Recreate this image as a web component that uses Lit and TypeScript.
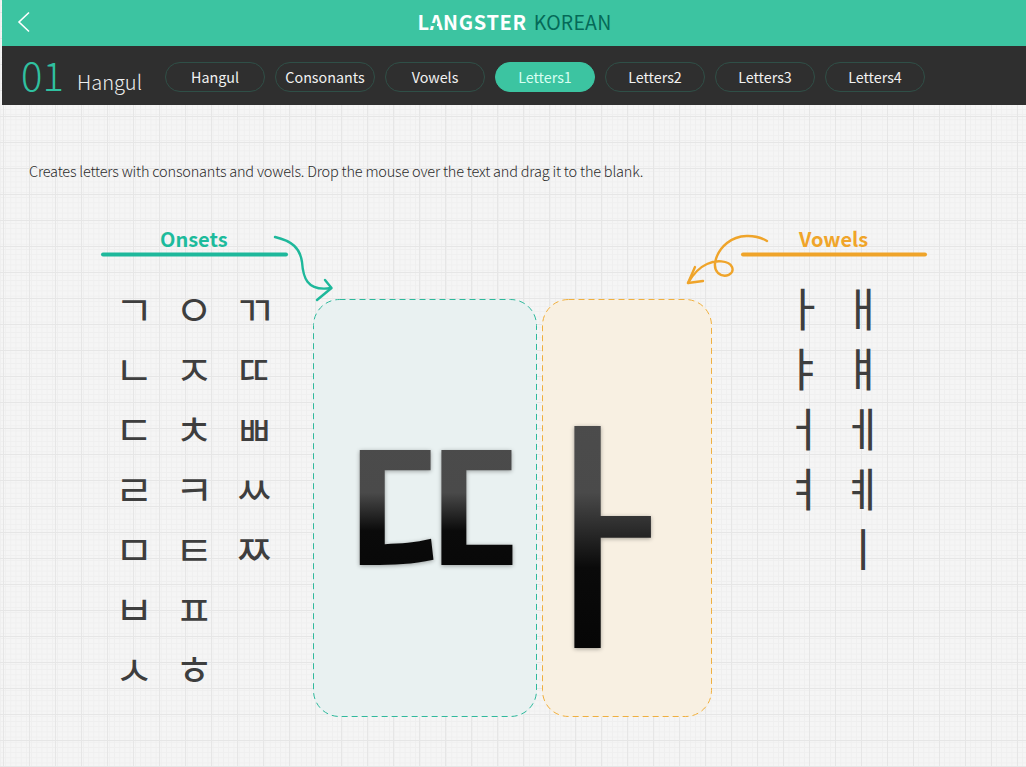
import { LitElement, html, css, svg } from "lit";
import { customElement } from "lit/decorators.js";

const TABS = ["Hangul", "Consonants", "Vowels", "Letters1", "Letters2", "Letters3", "Letters4"];
const ONSETS = ["ㄱ","ㅇ","ㄲ","ㄴ","ㅈ","ㄸ","ㄷ","ㅊ","ㅃ","ㄹ","ㅋ","ㅆ","ㅁ","ㅌ","ㅉ","ㅂ","ㅍ","","ㅅ","ㅎ",""];
const VOWELS = ["ㅏ","ㅐ","ㅑ","ㅒ","ㅓ","ㅔ","ㅕ","ㅖ","","ㅣ"];

@customElement("app-root")
export class AppRoot extends LitElement {
  static styles = css`
    :host { display: block; width: 1026px; height: 767px; overflow: hidden; position: relative;
      font-family: "Noto Sans CJK KR", "Noto Sans", sans-serif; color: #3a3a3a; background: #f4f4f4; }
    .page { height: 767px; display: flex; flex-direction: column; padding-left: 2px; box-sizing: border-box;
      background-color: #f5f5f5;
      background-image:
        linear-gradient(#e6e6e6 1px, transparent 1px),
        linear-gradient(90deg, #e6e6e6 1px, transparent 1px),
        linear-gradient(#efefef 1px, transparent 1px),
        linear-gradient(90deg, #efefef 1px, transparent 1px);
      background-size: 26px 26px, 26px 26px, 5.2px 5.2px, 5.2px 5.2px;
      background-position: 0 12px, 3px 0, 0 0, 0 0; }
    .top { height: 46px; flex: none; background: #3cc4a1; position: relative; display: flex; justify-content: center; align-items: center; }
    .back { position: absolute; left: 14px; top: 11px; }
    .logo { font-size: 20px; line-height: 44px; height: 46px; margin-left: 1px; color: #056a58; display: flex; gap: 7px; }
    .logo b { color: #fff; font-weight: 700; letter-spacing: 0.65px; position: relative; }
    .logo b::after { content: ""; position: absolute; left: 13px; top: 22.5px; width: 6px; height: 3px; background: #3cc4a1; }
    .logo span { letter-spacing: 0.2px; font-size: 19.5px; }
    .bar { height: 59px; flex: none; background: #2f2f2f; display: flex; align-items: center; padding-left: 19px; }
    .num { font-size: 40px; font-weight: 200; color: #2fc0a0; line-height: 59px; width: 56px; margin-top: -2px; }
    .title { font-size: 20px; font-weight: 300; color: #eee; width: 88px; margin-top: 12px; line-height: 32px; }
    .tabs { display: flex; gap: 10px; margin-top: 3px; }
    .tab { box-sizing: border-box; width: 100px; height: 30px; border-radius: 15px; border: 1px solid #2f4f47; color: #f2f2f2;
      font-size: 14.3px; text-align: center; line-height: 28px; }
    .tab.on { background: #3cc4a1; border-color: #3cc4a1; color: #d8fff2; }
    .intro { margin: 55px 0 0 27px; font-size: 14.5px; line-height: 22px; font-weight: 300; color: #2b2b2b; letter-spacing: -0.2px; }
    .stage { position: relative; flex: 1; }
    .grid { display: grid; position: absolute; }
    .cell { text-align: center; color: #3e3e3e; line-height: 60px; height: 60px; }
    .onsets { left: 102px; top: 173px; grid-template-columns: 60px 60px 60px; font-size: 42px; font-weight: 400; }
    .vowels { left: 772px; top: 171px; grid-template-columns: 60px 58px; font-size: 46px; font-weight: 400; }
    .zone { position: absolute; top: 194px; height: 418px; box-sizing: border-box; border-radius: 26px; }
    .z1 { left: 311px; width: 224px; background: #e9f1f1; }
    .z2 { left: 540px; width: 170px; background: #f8f0e2; }
    .big { font-weight: 500; line-height: 1; color: transparent;
      -webkit-background-clip: text; background-clip: text; }
    .b1 { font-size: 240px; background-image: linear-gradient(#4c4c4c 0%, #4a4a4a 49%, #0a0a0a 65%, #060606 100%); }
    .b2 { font-size: 251px; background-image: linear-gradient(#4c4c4c 0%, #4a4a4a 38%, #0a0a0a 68%, #060606 100%); }
    .shadow { position: absolute; filter: drop-shadow(0 1px 2px rgba(0,0,0,.35)); }
    .s1 { left: 323px; top: 270px; }
    .s2 { left: 477px; top: 292px; }
    .art { position: absolute; left: -2px; top: -105px; width: 1026px; height: 767px; pointer-events: none; }
    .head { position: absolute; font-weight: 700; font-size: 20px; line-height: 26px; }
    .h1 { left: 158px; top: 121px; color: #1dbb9c; }
    .h2 { left: 797px; top: 121px; color: #f0a52a; }
  `;

  private arrows() {
    return svg`
      <rect x="313.5" y="299.5" width="223" height="417" rx="26" fill="none" stroke="#2fb99c" stroke-dasharray="6 4"/>
      <rect x="542.5" y="299.5" width="169" height="417" rx="26" fill="none" stroke="#f0b040" stroke-dasharray="6 4"/>
      <line x1="103" y1="254.5" x2="286" y2="254.5" stroke="#1eb89b" stroke-width="4" stroke-linecap="round"/>
      <line x1="743" y1="254.5" x2="925" y2="254.5" stroke="#efa42a" stroke-width="4" stroke-linecap="round"/>
      <path d="M275 237 C292 241 300 248 302 262 C303 276 306 292 331 288" fill="none" stroke="#1eb89b" stroke-width="2.4" stroke-linecap="round"/>
      <path d="M325 280 L331.5 288 L317 300" fill="none" stroke="#1eb89b" stroke-width="2.4" stroke-linecap="round" stroke-linejoin="round"/>
      <path d="M767 241 C755 234 738 234 727 243 C717 251 711 266 718 273 C725 279 735 274 732 267 C729 260 715 260 707 264 C698 268 692 276 688 283" fill="none" stroke="#efa42a" stroke-width="2.4" stroke-linecap="round"/>
      <path d="M695 267 L688 283 L703 281" fill="none" stroke="#efa42a" stroke-width="2.4" stroke-linecap="round" stroke-linejoin="round"/>
    `;
  }

  render() {
    return html`<div class="page">
      <div class="top">
        <svg class="back" width="14" height="22" viewBox="0 0 14 22"><path d="M13 1.5 L3 11 L13 20.5" fill="none" stroke="#fff" stroke-width="1.6"/></svg>
        <div class="logo"><b>LANGSTER</b><span>KOREAN</span></div>
      </div>
      <div class="bar">
        <div class="num">01</div>
        <div class="title">Hangul</div>
        <div class="tabs">${TABS.map((t) => html`<div class="tab ${t === "Letters1" ? "on" : ""}">${t}</div>`)}</div>
      </div>
      <div class="stage">
        <div class="intro">Creates letters with consonants and vowels. Drop the mouse over the text and drag it to the blank.</div>
        <div class="head h1">Onsets</div>
        <div class="head h2">Vowels</div>
        <div class="grid onsets">${ONSETS.map((c) => html`<div class="cell">${c}</div>`)}</div>
        <div class="grid vowels">${VOWELS.map((c) => html`<div class="cell">${c}</div>`)}</div>
        <div class="zone z1"></div>
        <div class="zone z2"></div>
        <div class="shadow s1"><div class="big b1">ㄸ</div></div>
        <div class="shadow s2"><div class="big b2">ㅏ</div></div>
        <svg class="art" viewBox="0 0 1026 767">${this.arrows()}</svg>
      </div>
    </div>`;
  }
}
